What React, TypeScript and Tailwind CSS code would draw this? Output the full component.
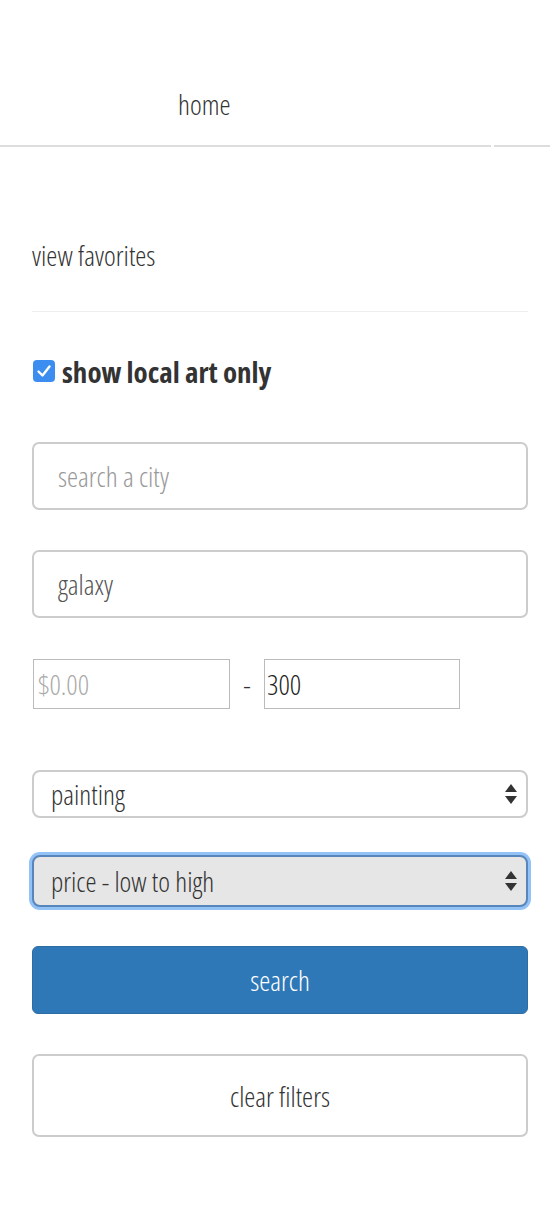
import React from "react";

const F = { fontFamily: '"Open Sans", "Liberation Sans", sans-serif' };

function Arrows() {
  return (
    <svg width="14" height="24" viewBox="0 0 14 24">
      <path d="M7 2 L13 10 L1 10 Z" fill="#333" />
      <path d="M7 22 L13 14 L1 14 Z" fill="#333" />
    </svg>
  );
}

export default function App() {
  return (
    <div
      className="w-[550px] h-[1232px] bg-white text-[#333] font-light [font-stretch:75%]"
      style={F}
    >
      <div className="h-[145px] pt-[89px]">
        <a className="block ml-[178px] text-[28px] leading-[30px] text-[#333]">home</a>
      </div>
      <div className="flex">
        <div className="w-[491px] h-[2px] bg-[#ddd]" />
        <div className="w-[3px] h-[2px] bg-white" />
        <div className="flex-1 h-[2px] bg-[#ddd]" />
      </div>
      <div className="pl-[32px] pr-[22px]">
        <div className="h-[164px] pt-[93px] text-[28px] leading-[30px]">view favorites</div>
        <div className="h-[1px] bg-[#eee]" />
        <label className="mt-[44px] flex items-center gap-[7px] h-[30px]">
          <span className="w-[22px] h-[22px] rounded-[4px] bg-[#3b8ef0] flex items-center justify-center ml-[1px]">
            <svg width="22" height="22" viewBox="0 0 22 22">
              <path d="M5.5 11.5 L9.5 15.5 L16.5 6.5" stroke="white" strokeWidth="2.4" fill="none" strokeLinecap="round" strokeLinejoin="round" />
            </svg>
          </span>
          <span className="text-[29px] font-bold leading-none text-[#333]">show local art only</span>
        </label>
        <div className="mt-[56px] h-[68px] border-2 border-[#ccc] rounded-[7px] flex items-center px-[24px] text-[28px] text-[#999]">
          search a city
        </div>
        <div className="mt-[40px] h-[68px] border-2 border-[#ccc] rounded-[7px] flex items-center px-[24px] text-[28px] text-[#555]">
          galaxy
        </div>
        <div className="mt-[41px] flex items-center">
          <div className="w-[197px] h-[50px] border border-[#bbb] flex items-center pl-[4px] text-[28px] text-[#aaa] ml-[1px]">
            $0.00
          </div>
          <span className="w-[34px] text-center text-[28px] text-[#333]">-</span>
          <div className="w-[196px] h-[50px] border border-[#bbb] flex items-center pl-[2px] text-[28px] text-[#222]">
            300
          </div>
        </div>
        <div className="mt-[61px] h-[48px] border-2 border-[#ccc] rounded-[8px] flex items-center justify-between pl-[17px] pr-[8px] text-[28px] text-[#333]">
          <span>painting</span>
          <Arrows />
        </div>
        <div className="mt-[37px] h-[52px] rounded-[8px] shadow-[0_0_0_3px_#93c2f7] border-2 border-[#5886bb] bg-[#e6e6e6] flex items-center justify-between pl-[17px] pr-[8px] text-[28px] text-[#333]">
          <span>price - low to high</span>
          <Arrows />
        </div>
        <div className="mt-[39px] h-[68px] bg-[#2f78b8] border border-[#2e6da4] rounded-[6px] flex items-center justify-center text-[28px] text-white">
          search
        </div>
        <div className="mt-[40px] h-[83px] border-2 border-[#ccc] rounded-[7px] flex items-center justify-center text-[28px] text-[#333]">
          clear filters
        </div>
      </div>
    </div>
  );
}
